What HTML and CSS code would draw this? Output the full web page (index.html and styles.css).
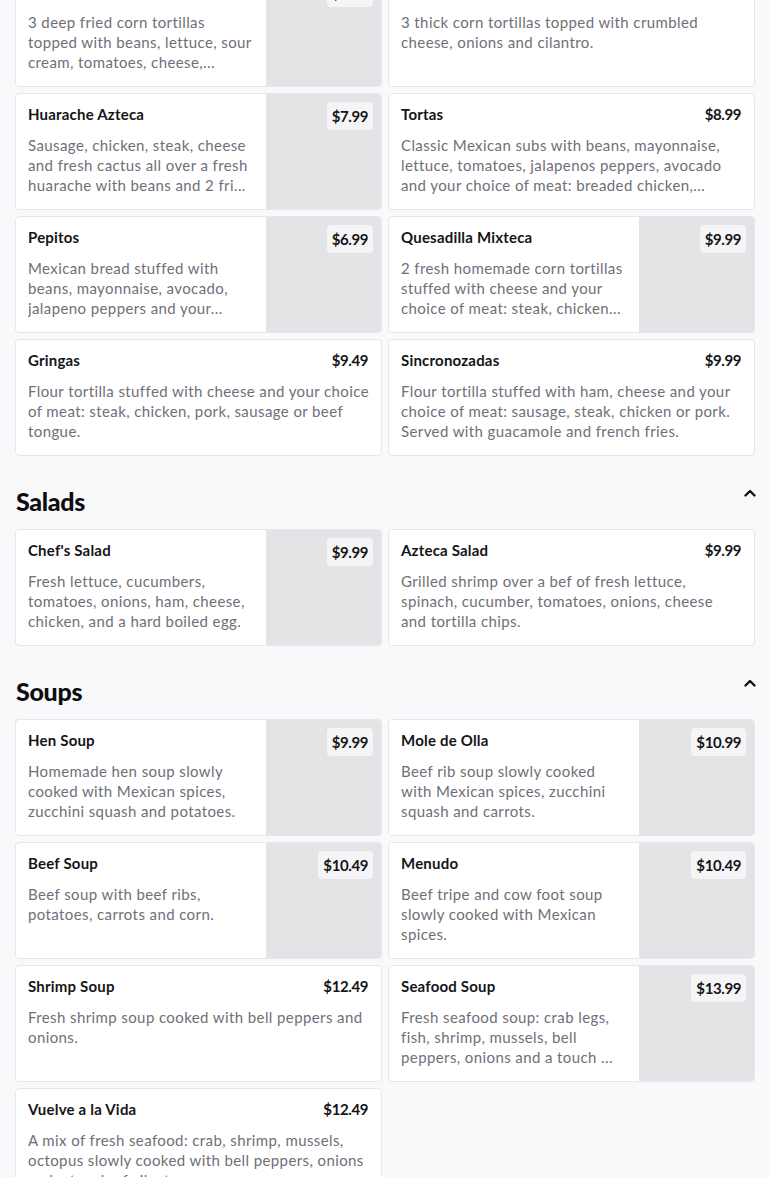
FILE: index.html
```html
<!DOCTYPE html>
<html>
<head>
<meta charset="utf-8">
<link rel="stylesheet" href="styles.css">
</head>
<body>
<div class="page">
  <div class="grid first">
    <div class="card has-img">
      <div class="body">
        <div class="head"><span class="name">Chalupas</span></div>
        <p class="desc">3 deep fried corn tortillas topped with beans, lettuce, sour cream, tomatoes, cheese,...</p>
      </div>
      <div class="img"><span class="badge">$7.99</span></div>
    </div>
    <div class="card">
      <div class="body">
        <div class="head"><span class="name">Sopes</span><span class="price">$7.99</span></div>
        <p class="desc">3 thick corn tortillas topped with crumbled cheese, onions and cilantro.</p>
      </div>
    </div>
    <div class="card has-img">
      <div class="body">
        <div class="head"><span class="name">Huarache Azteca</span></div>
        <p class="desc">Sausage, chicken, steak, cheese and fresh cactus all over a fresh huarache with beans and 2 fri...</p>
      </div>
      <div class="img"><span class="badge">$7.99</span></div>
    </div>
    <div class="card">
      <div class="body">
        <div class="head"><span class="name">Tortas</span><span class="price">$8.99</span></div>
        <p class="desc">Classic Mexican subs with beans, mayonnaise, lettuce, tomatoes, jalapenos peppers, avocado and your choice of meat: breaded chicken,...</p>
      </div>
    </div>
    <div class="card has-img">
      <div class="body">
        <div class="head"><span class="name">Pepitos</span></div>
        <p class="desc">Mexican bread stuffed with beans, mayonnaise, avocado, jalapeno peppers and your...</p>
      </div>
      <div class="img"><span class="badge">$6.99</span></div>
    </div>
    <div class="card has-img">
      <div class="body">
        <div class="head"><span class="name">Quesadilla Mixteca</span></div>
        <p class="desc">2 fresh homemade corn tortillas stuffed with cheese and your choice of meat: steak, chicken...</p>
      </div>
      <div class="img"><span class="badge">$9.99</span></div>
    </div>
    <div class="card">
      <div class="body">
        <div class="head"><span class="name">Gringas</span><span class="price">$9.49</span></div>
        <p class="desc">Flour tortilla stuffed with cheese and your choice of meat: steak, chicken, pork, sausage or beef tongue.</p>
      </div>
    </div>
    <div class="card">
      <div class="body">
        <div class="head"><span class="name">Sincronozadas</span><span class="price">$9.99</span></div>
        <p class="desc">Flour tortilla stuffed with ham, cheese and your choice of meat: sausage, steak, chicken or pork. Served with guacamole and french fries.</p>
      </div>
    </div>
  </div>

  <div class="section-head">
    <h2>Salads</h2>
    <svg class="chev" width="12" height="8" viewBox="0 0 12 8"><path d="M1.5 6.5 L6 2 L10.5 6.5" fill="none" stroke="#111" stroke-width="2.4" stroke-linecap="round" stroke-linejoin="round"/></svg>
  </div>
  <div class="grid">
    <div class="card has-img">
      <div class="body">
        <div class="head"><span class="name">Chef's Salad</span></div>
        <p class="desc">Fresh lettuce, cucumbers, tomatoes, onions, ham, cheese, chicken, and a hard boiled egg.</p>
      </div>
      <div class="img"><span class="badge">$9.99</span></div>
    </div>
    <div class="card">
      <div class="body">
        <div class="head"><span class="name">Azteca Salad</span><span class="price">$9.99</span></div>
        <p class="desc">Grilled shrimp over a bef of fresh lettuce, spinach, cucumber, tomatoes, onions, cheese and&nbsp;tortilla chips.</p>
      </div>
    </div>
  </div>

  <div class="section-head">
    <h2>Soups</h2>
    <svg class="chev" width="12" height="8" viewBox="0 0 12 8"><path d="M1.5 6.5 L6 2 L10.5 6.5" fill="none" stroke="#111" stroke-width="2.4" stroke-linecap="round" stroke-linejoin="round"/></svg>
  </div>
  <div class="grid">
    <div class="card has-img">
      <div class="body">
        <div class="head"><span class="name">Hen Soup</span></div>
        <p class="desc">Homemade hen soup slowly cooked with Mexican spices, zucchini squash and potatoes.</p>
      </div>
      <div class="img"><span class="badge">$9.99</span></div>
    </div>
    <div class="card has-img">
      <div class="body">
        <div class="head"><span class="name">Mole de Olla</span></div>
        <p class="desc">Beef rib soup slowly cooked with Mexican spices, zucchini squash and carrots.</p>
      </div>
      <div class="img"><span class="badge">$10.99</span></div>
    </div>
    <div class="card has-img">
      <div class="body">
        <div class="head"><span class="name">Beef Soup</span></div>
        <p class="desc">Beef soup with beef ribs, potatoes, carrots and corn.</p>
      </div>
      <div class="img"><span class="badge">$10.49</span></div>
    </div>
    <div class="card has-img">
      <div class="body">
        <div class="head"><span class="name">Menudo</span></div>
        <p class="desc">Beef tripe and cow foot soup slowly cooked with Mexican spices.</p>
      </div>
      <div class="img"><span class="badge">$10.49</span></div>
    </div>
    <div class="card">
      <div class="body">
        <div class="head"><span class="name">Shrimp Soup</span><span class="price">$12.49</span></div>
        <p class="desc">Fresh shrimp soup cooked with bell peppers and onions.</p>
      </div>
    </div>
    <div class="card has-img">
      <div class="body">
        <div class="head"><span class="name">Seafood Soup</span></div>
        <p class="desc">Fresh seafood soup: crab legs, fish, shrimp, mussels, bell peppers, onions and a touch ...</p>
      </div>
      <div class="img"><span class="badge">$13.99</span></div>
    </div>
    <div class="card">
      <div class="body">
        <div class="head"><span class="name">Vuelve a la Vida</span><span class="price">$12.49</span></div>
        <p class="desc">A mix of fresh seafood: crab, shrimp, mussels, octopus slowly cooked with bell peppers, onions and a touch of cilantro.</p>
      </div>
    </div>
  </div>
</div>
</body>
</html>
```

FILE: styles.css
```css
* { box-sizing: border-box; }
html, body { margin: 0; padding: 0; }
body {
  background: #f9f9fb;
  font-family: Lato, "Liberation Sans", sans-serif;
  color: #1b1b1f;
  overflow: hidden;
}
.page {
  padding: 0 15px 40px 15px;
}
.grid {
  display: grid;
  grid-template-columns: 1fr 1fr;
  gap: 6px;
}
.grid.first {
  margin-top: -30px;
}
.card {
  height: 117px;
  background: #fff;
  border: 1px solid #e6e6ec;
  border-radius: 4px;
  display: flex;
  overflow: hidden;
}
.body {
  flex: 1;
  min-width: 0;
  padding: 9px 13px 0 12px;
}
.has-img .body {
  padding-right: 14px;
}
.card:not(.has-img) .desc {
  margin-right: -5px;
}
.head {
  display: flex;
  justify-content: space-between;
  align-items: center;
  height: 22px;
  margin-bottom: 10px;
}
.name, .price, .badge {
  font-family: Lato, "Liberation Sans", sans-serif;
  font-weight: 700;
  font-size: 15px;
  color: #151517;
}
.name {
  letter-spacing: 0.2px;
}
.price, .badge {
  letter-spacing: -0.4px;
}
.desc {
  margin: 0;
  font-size: 15px;
  line-height: 20px;
  color: #6f6f79;
  letter-spacing: 0.4px;
  display: -webkit-box;
  -webkit-line-clamp: 3;
  -webkit-box-orient: vertical;
  overflow: hidden;
}
.img {
  width: 115px;
  flex: none;
  background: #e4e4e7;
  position: relative;
}
.badge {
  position: absolute;
  top: 8px;
  right: 8px;
  background: #f5f5f7;
  border-radius: 4px;
  padding: 4px 5px;
  line-height: 20px;
}
.section-head {
  display: flex;
  justify-content: space-between;
  align-items: flex-start;
  padding: 30px 0 13px 1px;
}
.section-head h2 {
  margin: 0;
  font-family: Lato, "Liberation Sans", sans-serif;
  font-size: 25px;
  font-weight: 900;
  line-height: 30px;
  color: #0d0d0f;
  letter-spacing: -0.3px;
}
.chev {
  margin-right: -1px;
  margin-top: 3px;
}
```
